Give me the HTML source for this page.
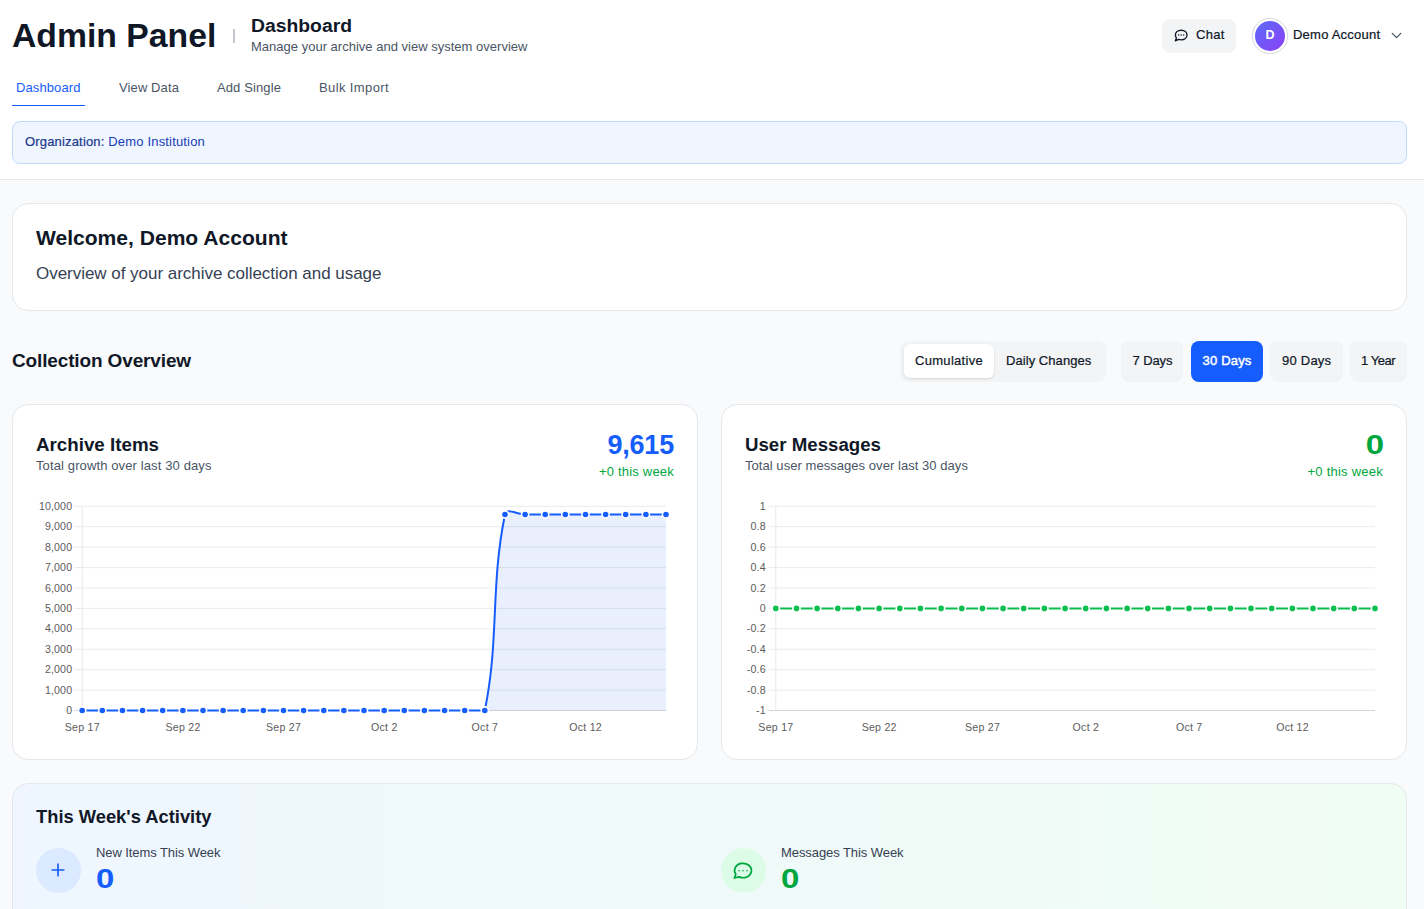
<!DOCTYPE html>
<html lang="en">
<head>
<meta charset="utf-8">
<title>Admin Panel - Dashboard</title>
<style>
*{box-sizing:border-box;margin:0;padding:0}
html,body{width:1424px;height:909px;overflow:hidden}
body{background:#f9fafb;font-family:"Liberation Sans",sans-serif;color:#101828;position:relative}
.abs{position:absolute;white-space:nowrap;line-height:1}
.med{-webkit-text-stroke:0.22px currentColor}
header{position:absolute;left:0;top:0;width:1424px;height:180px;background:#fff;border-bottom:1px solid #e5e7eb}
.h1{left:12px;top:18.9px;font-size:33px;font-weight:700;color:#101828}
.sep{left:233.2px;top:28.5px;width:1.6px;height:14.4px;background:#c3c7d4}
.h2{left:251px;top:17px;font-size:18px;font-weight:700;color:#101828}
.sub{left:251px;top:40px;font-size:13px;color:#4a5565}
.tab{top:81px;font-size:13px;color:#4a5565}
.tab.on{color:#155dfc}
.tabline{left:12px;top:104.6px;width:73px;height:1.4px;background:#155dfc}
.chat{left:1162px;top:19px;width:74px;height:34px;background:#f3f4f6;border-radius:8px}
.org{left:12px;top:121px;width:1395px;height:43px;background:#eff6ff;border:1px solid #bedbff;border-radius:8px}
.card{position:absolute;background:#fff;border:1px solid #e5e7eb;border-radius:16px}
.t20{font-size:20px;font-weight:700;color:#101828}
.t18{font-size:18px;font-weight:700;color:#101828}
.s13{font-size:13px;color:#4a5565}
.big{font-size:27px;font-weight:700}
.zero{display:inline-block;transform:scaleX(1.22);transform-origin:left center}
.blue{color:#155dfc}
.green{color:#00a63e}
.btn{position:absolute;top:341px;height:40.5px;background:#f3f4f6;border-radius:8px}
.btxt{top:354px;font-size:13px;color:#101828}
svg{position:absolute;overflow:visible}
svg text{font-family:"Liberation Sans",sans-serif;font-size:10.6px;fill:#5c5c5c;letter-spacing:0.25px}
/*LS*/#h1{letter-spacing:0;transform:scaleX(1.022);transform-origin:left center}
#h2{letter-spacing:0;transform:scaleX(1.0741);transform-origin:left center}
#sub{letter-spacing:0.01px}
#tab1{letter-spacing:0.10px}
#tab2{letter-spacing:0.11px}
#tab3{letter-spacing:0.11px}
#tab4{letter-spacing:0.39px}
#chat{letter-spacing:0.26px}
#acct{letter-spacing:0.23px}
#org{letter-spacing:0.17px}
#welcome{letter-spacing:0;transform:scaleX(1.0526);transform-origin:left center}
#wsub{letter-spacing:-0.03px}
#coll{letter-spacing:-0.14px}
#b1{letter-spacing:0.30px}
#b2{letter-spacing:0.06px}
#b3{letter-spacing:-0.13px}
#b4{letter-spacing:0.17px}
#b5{letter-spacing:0.23px}
#b6{letter-spacing:-0.48px}
#c1t{letter-spacing:0;transform:scaleX(1.0418);transform-origin:left center}
#c1s{letter-spacing:0.12px}
#c1v{letter-spacing:-0.2px}
#c1w{letter-spacing:0.20px}
#c2t{letter-spacing:0;transform:scaleX(1.0375);transform-origin:left center}
#c2s{letter-spacing:0.05px}
#c2v{letter-spacing:0}
#c2w{letter-spacing:0.24px}
#act{letter-spacing:0;transform:scaleX(1.0182);transform-origin:left center}
#ni{letter-spacing:-0.08px}
#niv{letter-spacing:0}
#mw{letter-spacing:-0.07px}
#mwv{letter-spacing:0}/*ENDLS*/
</style>
</head>
<body>
<header>
  <div class="abs h1" id="h1">Admin Panel</div>
  <div class="abs sep"></div>
  <div class="abs h2" id="h2">Dashboard</div>
  <div class="abs sub" id="sub">Manage your archive and view system overview</div>
  <div class="abs tab on" id="tab1" style="left:16px">Dashboard</div>
  <div class="abs tab" id="tab2" style="left:119px">View Data</div>
  <div class="abs tab" id="tab3" style="left:217px">Add Single</div>
  <div class="abs tab" id="tab4" style="left:319px">Bulk Import</div>
  <div class="abs tabline"></div>
  <div class="abs chat"></div>
  <svg style="left:1173.7px;top:29px" width="14" height="13" viewBox="0 0 14 13" fill="none" stroke="#101828" stroke-width="1.35" stroke-linecap="round" stroke-linejoin="round"><path d="M7.2 1.2C10.5 1.2 13 3.3 13 6s-2.5 4.8-5.800 4.800c-.9 0-1.700-.15-2.500-.45L1.300 11.800l1.200-2.700C1.800 8.200 1.400 7.200 1.400 6c0-2.700 2.500-4.800 5.800-4.800Z"/><path d="M4.700 6.100h.01M7.200 6.100h.01M9.700 6.100h.01" stroke-width="1.500"/></svg>
  <div class="abs med" id="chat" style="left:1196px;top:28px;font-size:13px;color:#101828">Chat</div>
  <div class="abs" style="left:1252.400px;top:18.400px;width:35.200px;height:35.200px;border-radius:50%;border:1.200px solid #d4d7dd;background:#fff"></div>
  <div class="abs" style="left:1255px;top:21px;width:30px;height:30px;border-radius:50%;background:linear-gradient(135deg,#5b6cf9,#8b3ff5)"></div>
  <div class="abs" style="left:1255px;top:28.500px;width:30px;text-align:center;font-size:12.500px;font-weight:700;color:#fff">D</div>
  <div class="abs med" id="acct" style="left:1293px;top:28px;font-size:13px;color:#101828">Demo Account</div>
  <svg style="left:1387.500px;top:27.100px" width="17" height="17" viewBox="0 0 24 24" fill="none" stroke="#4a5565" stroke-width="1.900" stroke-linecap="round" stroke-linejoin="round"><path d="M6 9l6 6 6-6"/></svg>
  <div class="abs org"></div>
  <div class="abs" id="org" style="left:25px;top:135px;font-size:13px;color:#193cb8"><span class="med" style="color:#1c398e">Organization:</span> Demo Institution</div>
</header>

<div class="card" style="left:12px;top:203px;width:1395px;height:108px"></div>
<div class="abs t20" id="welcome" style="left:36px;top:228px">Welcome, Demo Account</div>
<div class="abs" id="wsub" style="left:36px;top:265px;font-size:17px;color:#364153">Overview of your archive collection and usage</div>

<div class="abs t20" id="coll" style="left:12px;top:351.2px;font-size:19px">Collection Overview</div>

<div class="btn" style="left:900px;width:206px"></div>
<div class="abs" style="left:904px;top:344px;width:90px;height:34px;background:#fff;border-radius:6px;box-shadow:0 1px 3px rgba(0,0,0,.1),0 1px 2px -1px rgba(0,0,0,.1)"></div>
<div class="abs btxt med" id="b1" style="left:915px">Cumulative</div>
<div class="abs btxt med" id="b2" style="left:1006px">Daily Changes</div>
<div class="btn" style="left:1121px;width:62px"></div>
<div class="abs btxt med" id="b3" style="left:1132.6px">7 Days</div>
<div class="btn" style="left:1191px;width:72px;background:#155dfc"></div>
<div class="abs btxt med" id="b4" style="left:1202.6px;color:#fff;-webkit-text-stroke:0.45px #fff">30 Days</div>
<div class="btn" style="left:1270px;width:73px"></div>
<div class="abs btxt med" id="b5" style="left:1282px">90 Days</div>
<div class="btn" style="left:1350px;width:57px"></div>
<div class="abs btxt med" id="b6" style="left:1361px">1 Year</div>

<div class="card" style="left:12px;top:404px;width:686px;height:356px"></div>
<div class="abs t18" id="c1t" style="left:36px;top:436.2px">Archive Items</div>
<div class="abs s13" id="c1s" style="left:36px;top:459.3px">Total growth over last 30 days</div>
<div class="abs big blue" id="c1v" style="right:750px;top:432px">9,615</div>
<div class="abs s13 green" id="c1w" style="right:750px;top:465px;color:#00a63e">+0 this week</div>
<!--CHART1--><svg style="left:0;top:0" width="1424" height="909">
<line x1="74.5" y1="506.3" x2="666.0" y2="506.3" stroke="#e9ebee" stroke-width="1"/>
<text x="72.2" y="509.8" text-anchor="end" style="letter-spacing:0.15px">10,000</text>
<line x1="74.5" y1="526.7" x2="666.0" y2="526.7" stroke="#e9ebee" stroke-width="1"/>
<text x="72.2" y="530.2" text-anchor="end" style="letter-spacing:0.15px">9,000</text>
<line x1="74.5" y1="547.1" x2="666.0" y2="547.1" stroke="#e9ebee" stroke-width="1"/>
<text x="72.2" y="550.6" text-anchor="end" style="letter-spacing:0.15px">8,000</text>
<line x1="74.5" y1="567.6" x2="666.0" y2="567.6" stroke="#e9ebee" stroke-width="1"/>
<text x="72.2" y="571.1" text-anchor="end" style="letter-spacing:0.15px">7,000</text>
<line x1="74.5" y1="588.0" x2="666.0" y2="588.0" stroke="#e9ebee" stroke-width="1"/>
<text x="72.2" y="591.5" text-anchor="end" style="letter-spacing:0.15px">6,000</text>
<line x1="74.5" y1="608.4" x2="666.0" y2="608.4" stroke="#e9ebee" stroke-width="1"/>
<text x="72.2" y="611.9" text-anchor="end" style="letter-spacing:0.15px">5,000</text>
<line x1="74.5" y1="628.8" x2="666.0" y2="628.8" stroke="#e9ebee" stroke-width="1"/>
<text x="72.2" y="632.3" text-anchor="end" style="letter-spacing:0.15px">4,000</text>
<line x1="74.5" y1="649.2" x2="666.0" y2="649.2" stroke="#e9ebee" stroke-width="1"/>
<text x="72.2" y="652.7" text-anchor="end" style="letter-spacing:0.15px">3,000</text>
<line x1="74.5" y1="669.7" x2="666.0" y2="669.7" stroke="#e9ebee" stroke-width="1"/>
<text x="72.2" y="673.2" text-anchor="end" style="letter-spacing:0.15px">2,000</text>
<line x1="74.5" y1="690.1" x2="666.0" y2="690.1" stroke="#e9ebee" stroke-width="1"/>
<text x="72.2" y="693.6" text-anchor="end" style="letter-spacing:0.15px">1,000</text>
<line x1="74.5" y1="710.5" x2="666.0" y2="710.5" stroke="#d3d5d9" stroke-width="1"/>
<text x="72.2" y="714.0" text-anchor="end" style="letter-spacing:0.15px">0</text>
<line x1="82.2" y1="506.3" x2="82.2" y2="710.5" stroke="#e7e9ed" stroke-width="1"/>
<path d="M82.2 710.5 C90.3 710.5 94.3 710.5 102.3 710.5 C110.4 710.5 114.4 710.5 122.5 710.5 C130.5 710.5 134.5 710.5 142.6 710.5 C150.6 710.5 154.7 710.5 162.7 710.5 C170.8 710.5 174.8 710.5 182.9 710.5 C190.9 710.5 194.9 710.5 203.0 710.5 C211.0 710.5 215.1 710.5 223.1 710.5 C231.2 710.5 235.2 710.5 243.2 710.5 C251.3 710.5 255.3 710.5 263.4 710.5 C271.4 710.5 275.5 710.5 283.5 710.5 C291.6 710.5 295.6 710.5 303.6 710.5 C311.7 710.5 315.7 710.5 323.8 710.5 C331.8 710.5 335.9 710.5 343.9 710.5 C352.0 710.5 356.0 710.5 364.0 710.5 C372.1 710.5 376.1 710.5 384.2 710.5 C392.2 710.5 396.2 710.5 404.3 710.5 C412.3 710.5 416.4 710.5 424.4 710.5 C432.5 710.5 436.5 710.5 444.6 710.5 C452.6 710.5 456.6 710.5 464.7 710.5 C472.7 710.5 483.3 710.5 484.8 710.5 C499.4 639.4 490.3 585.6 505.0 514.5 C506.4 507.2 517.0 514.5 525.1 514.5 C533.1 514.5 537.2 514.5 545.2 514.5 C553.3 514.5 557.3 514.5 565.3 514.5 C573.4 514.5 577.4 514.5 585.5 514.5 C593.5 514.5 597.6 514.5 605.6 514.5 C613.7 514.5 617.7 514.5 625.7 514.5 C633.8 514.5 637.8 514.5 645.9 514.5 C653.9 514.5 657.9 514.5 666.0 514.5 L666.0 710.5 L82.2 710.5 Z" fill="rgba(37,99,235,0.1)" stroke="none"/>
<path d="M82.2 710.5 C90.3 710.5 94.3 710.5 102.3 710.5 C110.4 710.5 114.4 710.5 122.5 710.5 C130.5 710.5 134.5 710.5 142.6 710.5 C150.6 710.5 154.7 710.5 162.7 710.5 C170.8 710.5 174.8 710.5 182.9 710.5 C190.9 710.5 194.9 710.5 203.0 710.5 C211.0 710.5 215.1 710.5 223.1 710.5 C231.2 710.5 235.2 710.5 243.2 710.5 C251.3 710.5 255.3 710.5 263.4 710.5 C271.4 710.5 275.5 710.5 283.5 710.5 C291.6 710.5 295.6 710.5 303.6 710.5 C311.7 710.5 315.7 710.5 323.8 710.5 C331.8 710.5 335.9 710.5 343.9 710.5 C352.0 710.5 356.0 710.5 364.0 710.5 C372.1 710.5 376.1 710.5 384.2 710.5 C392.2 710.5 396.2 710.5 404.3 710.5 C412.3 710.5 416.4 710.5 424.4 710.5 C432.5 710.5 436.5 710.5 444.6 710.5 C452.6 710.5 456.6 710.5 464.7 710.5 C472.7 710.5 483.3 710.5 484.8 710.5 C499.4 639.4 490.3 585.6 505.0 514.5 C506.4 507.2 517.0 514.5 525.1 514.5 C533.1 514.5 537.2 514.5 545.2 514.5 C553.3 514.5 557.3 514.5 565.3 514.5 C573.4 514.5 577.4 514.5 585.5 514.5 C593.5 514.5 597.6 514.5 605.6 514.5 C613.7 514.5 617.7 514.5 625.7 514.5 C633.8 514.5 637.8 514.5 645.9 514.5 C653.9 514.5 657.9 514.5 666.0 514.5" fill="none" stroke="#155dfc" stroke-width="2"/>
<circle cx="82.2" cy="710.5" r="3.6" fill="#155dfc" stroke="#fff" stroke-width="1.6"/>
<circle cx="102.3" cy="710.5" r="3.6" fill="#155dfc" stroke="#fff" stroke-width="1.6"/>
<circle cx="122.5" cy="710.5" r="3.6" fill="#155dfc" stroke="#fff" stroke-width="1.6"/>
<circle cx="142.6" cy="710.5" r="3.6" fill="#155dfc" stroke="#fff" stroke-width="1.6"/>
<circle cx="162.7" cy="710.5" r="3.6" fill="#155dfc" stroke="#fff" stroke-width="1.6"/>
<circle cx="182.9" cy="710.5" r="3.6" fill="#155dfc" stroke="#fff" stroke-width="1.6"/>
<circle cx="203.0" cy="710.5" r="3.6" fill="#155dfc" stroke="#fff" stroke-width="1.6"/>
<circle cx="223.1" cy="710.5" r="3.6" fill="#155dfc" stroke="#fff" stroke-width="1.6"/>
<circle cx="243.2" cy="710.5" r="3.6" fill="#155dfc" stroke="#fff" stroke-width="1.6"/>
<circle cx="263.4" cy="710.5" r="3.6" fill="#155dfc" stroke="#fff" stroke-width="1.6"/>
<circle cx="283.5" cy="710.5" r="3.6" fill="#155dfc" stroke="#fff" stroke-width="1.6"/>
<circle cx="303.6" cy="710.5" r="3.6" fill="#155dfc" stroke="#fff" stroke-width="1.6"/>
<circle cx="323.8" cy="710.5" r="3.6" fill="#155dfc" stroke="#fff" stroke-width="1.6"/>
<circle cx="343.9" cy="710.5" r="3.6" fill="#155dfc" stroke="#fff" stroke-width="1.6"/>
<circle cx="364.0" cy="710.5" r="3.6" fill="#155dfc" stroke="#fff" stroke-width="1.6"/>
<circle cx="384.2" cy="710.5" r="3.6" fill="#155dfc" stroke="#fff" stroke-width="1.6"/>
<circle cx="404.3" cy="710.5" r="3.6" fill="#155dfc" stroke="#fff" stroke-width="1.6"/>
<circle cx="424.4" cy="710.5" r="3.6" fill="#155dfc" stroke="#fff" stroke-width="1.6"/>
<circle cx="444.6" cy="710.5" r="3.6" fill="#155dfc" stroke="#fff" stroke-width="1.6"/>
<circle cx="464.7" cy="710.5" r="3.6" fill="#155dfc" stroke="#fff" stroke-width="1.6"/>
<circle cx="484.8" cy="710.5" r="3.6" fill="#155dfc" stroke="#fff" stroke-width="1.6"/>
<circle cx="505.0" cy="514.5" r="3.6" fill="#155dfc" stroke="#fff" stroke-width="1.6"/>
<circle cx="525.1" cy="514.5" r="3.6" fill="#155dfc" stroke="#fff" stroke-width="1.6"/>
<circle cx="545.2" cy="514.5" r="3.6" fill="#155dfc" stroke="#fff" stroke-width="1.6"/>
<circle cx="565.3" cy="514.5" r="3.6" fill="#155dfc" stroke="#fff" stroke-width="1.6"/>
<circle cx="585.5" cy="514.5" r="3.6" fill="#155dfc" stroke="#fff" stroke-width="1.6"/>
<circle cx="605.6" cy="514.5" r="3.6" fill="#155dfc" stroke="#fff" stroke-width="1.6"/>
<circle cx="625.7" cy="514.5" r="3.6" fill="#155dfc" stroke="#fff" stroke-width="1.6"/>
<circle cx="645.9" cy="514.5" r="3.6" fill="#155dfc" stroke="#fff" stroke-width="1.6"/>
<circle cx="666.0" cy="514.5" r="3.6" fill="#155dfc" stroke="#fff" stroke-width="1.6"/>
<text x="82.3" y="731.4" text-anchor="middle">Sep 17</text>
<text x="183.0" y="731.4" text-anchor="middle">Sep 22</text>
<text x="283.6" y="731.4" text-anchor="middle">Sep 27</text>
<text x="384.3" y="731.4" text-anchor="middle">Oct 2</text>
<text x="484.9" y="731.4" text-anchor="middle">Oct 7</text>
<text x="585.6" y="731.4" text-anchor="middle">Oct 12</text>
</svg><!--/CHART1-->

<div class="card" style="left:721px;top:404px;width:686px;height:356px"></div>
<div class="abs t18" id="c2t" style="left:745px;top:436.2px">User Messages</div>
<div class="abs s13" id="c2s" style="left:745px;top:459.3px">Total user messages over last 30 days</div>
<div class="abs big green" id="c2v" style="right:40px;top:432.3px"><span class="zero" style="transform-origin:right center">0</span></div>
<div class="abs s13 green" id="c2w" style="right:41px;top:465px;color:#00a63e">+0 this week</div>
<!--CHART2--><svg style="left:0;top:0" width="1424" height="909">
<line x1="768.4" y1="506.3" x2="1375.0" y2="506.3" stroke="#e9ebee" stroke-width="1"/>
<text x="765.7" y="509.8" text-anchor="end" style="letter-spacing:0.15px">1</text>
<line x1="768.4" y1="526.7" x2="1375.0" y2="526.7" stroke="#e9ebee" stroke-width="1"/>
<text x="765.7" y="530.2" text-anchor="end" style="letter-spacing:0.15px">0.8</text>
<line x1="768.4" y1="547.1" x2="1375.0" y2="547.1" stroke="#e9ebee" stroke-width="1"/>
<text x="765.7" y="550.6" text-anchor="end" style="letter-spacing:0.15px">0.6</text>
<line x1="768.4" y1="567.6" x2="1375.0" y2="567.6" stroke="#e9ebee" stroke-width="1"/>
<text x="765.7" y="571.1" text-anchor="end" style="letter-spacing:0.15px">0.4</text>
<line x1="768.4" y1="588.0" x2="1375.0" y2="588.0" stroke="#e9ebee" stroke-width="1"/>
<text x="765.7" y="591.5" text-anchor="end" style="letter-spacing:0.15px">0.2</text>
<line x1="768.4" y1="608.4" x2="1375.0" y2="608.4" stroke="#e9ebee" stroke-width="1"/>
<text x="765.7" y="611.9" text-anchor="end" style="letter-spacing:0.15px">0</text>
<line x1="768.4" y1="628.8" x2="1375.0" y2="628.8" stroke="#e9ebee" stroke-width="1"/>
<text x="765.7" y="632.3" text-anchor="end" style="letter-spacing:0.15px">-0.2</text>
<line x1="768.4" y1="649.2" x2="1375.0" y2="649.2" stroke="#e9ebee" stroke-width="1"/>
<text x="765.7" y="652.7" text-anchor="end" style="letter-spacing:0.15px">-0.4</text>
<line x1="768.4" y1="669.7" x2="1375.0" y2="669.7" stroke="#e9ebee" stroke-width="1"/>
<text x="765.7" y="673.2" text-anchor="end" style="letter-spacing:0.15px">-0.6</text>
<line x1="768.4" y1="690.1" x2="1375.0" y2="690.1" stroke="#e9ebee" stroke-width="1"/>
<text x="765.7" y="693.6" text-anchor="end" style="letter-spacing:0.15px">-0.8</text>
<line x1="768.4" y1="710.5" x2="1375.0" y2="710.5" stroke="#d3d5d9" stroke-width="1"/>
<text x="765.7" y="714.0" text-anchor="end" style="letter-spacing:0.15px">-1</text>
<line x1="775.8" y1="506.3" x2="775.8" y2="710.5" stroke="#e7e9ed" stroke-width="1"/>
<path d="M775.8 608.4 C784.1 608.4 788.2 608.4 796.5 608.4 C804.7 608.4 808.9 608.4 817.1 608.4 C825.4 608.4 829.5 608.4 837.8 608.4 C846.1 608.4 850.2 608.4 858.4 608.4 C866.7 608.4 870.8 608.4 879.1 608.4 C887.4 608.4 891.5 608.4 899.8 608.4 C908.0 608.4 912.2 608.4 920.4 608.4 C928.7 608.4 932.8 608.4 941.1 608.4 C949.4 608.4 953.5 608.4 961.8 608.4 C970.0 608.4 974.2 608.4 982.4 608.4 C990.7 608.4 994.8 608.4 1003.1 608.4 C1011.3 608.4 1015.5 608.4 1023.7 608.4 C1032.0 608.4 1036.1 608.4 1044.4 608.4 C1052.7 608.4 1056.8 608.4 1065.1 608.4 C1073.3 608.4 1077.5 608.4 1085.7 608.4 C1094.0 608.4 1098.1 608.4 1106.4 608.4 C1114.7 608.4 1118.8 608.4 1127.1 608.4 C1135.3 608.4 1139.5 608.4 1147.7 608.4 C1156.0 608.4 1160.1 608.4 1168.4 608.4 C1176.6 608.4 1180.8 608.4 1189.0 608.4 C1197.3 608.4 1201.4 608.4 1209.7 608.4 C1218.0 608.4 1222.1 608.4 1230.4 608.4 C1238.6 608.4 1242.8 608.4 1251.0 608.4 C1259.3 608.4 1263.4 608.4 1271.7 608.4 C1280.0 608.4 1284.1 608.4 1292.4 608.4 C1300.6 608.4 1304.7 608.4 1313.0 608.4 C1321.3 608.4 1325.4 608.4 1333.7 608.4 C1341.9 608.4 1346.1 608.4 1354.3 608.4 C1362.6 608.4 1366.7 608.4 1375.0 608.4" fill="none" stroke="#0abf4f" stroke-width="2"/>
<circle cx="775.8" cy="608.4" r="3.6" fill="#0abf4f" stroke="#fff" stroke-width="1.6"/>
<circle cx="796.5" cy="608.4" r="3.6" fill="#0abf4f" stroke="#fff" stroke-width="1.6"/>
<circle cx="817.1" cy="608.4" r="3.6" fill="#0abf4f" stroke="#fff" stroke-width="1.6"/>
<circle cx="837.8" cy="608.4" r="3.6" fill="#0abf4f" stroke="#fff" stroke-width="1.6"/>
<circle cx="858.4" cy="608.4" r="3.6" fill="#0abf4f" stroke="#fff" stroke-width="1.6"/>
<circle cx="879.1" cy="608.4" r="3.6" fill="#0abf4f" stroke="#fff" stroke-width="1.6"/>
<circle cx="899.8" cy="608.4" r="3.6" fill="#0abf4f" stroke="#fff" stroke-width="1.6"/>
<circle cx="920.4" cy="608.4" r="3.6" fill="#0abf4f" stroke="#fff" stroke-width="1.6"/>
<circle cx="941.1" cy="608.4" r="3.6" fill="#0abf4f" stroke="#fff" stroke-width="1.6"/>
<circle cx="961.8" cy="608.4" r="3.6" fill="#0abf4f" stroke="#fff" stroke-width="1.6"/>
<circle cx="982.4" cy="608.4" r="3.6" fill="#0abf4f" stroke="#fff" stroke-width="1.6"/>
<circle cx="1003.1" cy="608.4" r="3.6" fill="#0abf4f" stroke="#fff" stroke-width="1.6"/>
<circle cx="1023.7" cy="608.4" r="3.6" fill="#0abf4f" stroke="#fff" stroke-width="1.6"/>
<circle cx="1044.4" cy="608.4" r="3.6" fill="#0abf4f" stroke="#fff" stroke-width="1.6"/>
<circle cx="1065.1" cy="608.4" r="3.6" fill="#0abf4f" stroke="#fff" stroke-width="1.6"/>
<circle cx="1085.7" cy="608.4" r="3.6" fill="#0abf4f" stroke="#fff" stroke-width="1.6"/>
<circle cx="1106.4" cy="608.4" r="3.6" fill="#0abf4f" stroke="#fff" stroke-width="1.6"/>
<circle cx="1127.1" cy="608.4" r="3.6" fill="#0abf4f" stroke="#fff" stroke-width="1.6"/>
<circle cx="1147.7" cy="608.4" r="3.6" fill="#0abf4f" stroke="#fff" stroke-width="1.6"/>
<circle cx="1168.4" cy="608.4" r="3.6" fill="#0abf4f" stroke="#fff" stroke-width="1.6"/>
<circle cx="1189.0" cy="608.4" r="3.6" fill="#0abf4f" stroke="#fff" stroke-width="1.6"/>
<circle cx="1209.7" cy="608.4" r="3.6" fill="#0abf4f" stroke="#fff" stroke-width="1.6"/>
<circle cx="1230.4" cy="608.4" r="3.6" fill="#0abf4f" stroke="#fff" stroke-width="1.6"/>
<circle cx="1251.0" cy="608.4" r="3.6" fill="#0abf4f" stroke="#fff" stroke-width="1.6"/>
<circle cx="1271.7" cy="608.4" r="3.6" fill="#0abf4f" stroke="#fff" stroke-width="1.6"/>
<circle cx="1292.4" cy="608.4" r="3.6" fill="#0abf4f" stroke="#fff" stroke-width="1.6"/>
<circle cx="1313.0" cy="608.4" r="3.6" fill="#0abf4f" stroke="#fff" stroke-width="1.6"/>
<circle cx="1333.7" cy="608.4" r="3.6" fill="#0abf4f" stroke="#fff" stroke-width="1.6"/>
<circle cx="1354.3" cy="608.4" r="3.6" fill="#0abf4f" stroke="#fff" stroke-width="1.6"/>
<circle cx="1375.0" cy="608.4" r="3.6" fill="#0abf4f" stroke="#fff" stroke-width="1.6"/>
<text x="775.9" y="731.4" text-anchor="middle">Sep 17</text>
<text x="879.2" y="731.4" text-anchor="middle">Sep 22</text>
<text x="982.5" y="731.4" text-anchor="middle">Sep 27</text>
<text x="1085.9" y="731.4" text-anchor="middle">Oct 2</text>
<text x="1189.2" y="731.4" text-anchor="middle">Oct 7</text>
<text x="1292.5" y="731.4" text-anchor="middle">Oct 12</text>
</svg><!--/CHART2-->

<div class="card" style="left:12px;top:783px;width:1395px;height:200px;background:linear-gradient(90deg,#eff6ff,#f0fdf4)"></div>
<div class="abs t18" id="act" style="left:36px;top:808.3px">This Week's Activity</div>
<div class="abs" style="left:35.900px;top:847.800px;width:45px;height:45px;border-radius:50%;background:#dbeafe"></div>
<svg style="left:48.400px;top:860.400px" width="20" height="20" viewBox="0 0 24 24" fill="none" stroke="#155dfc" stroke-width="2" stroke-linecap="round"><path d="M5 12h14M12 5v14"/></svg>
<div class="abs" id="ni" style="left:96px;top:846px;font-size:13px;color:#364153">New Items This Week</div>
<div class="abs big blue" id="niv" style="left:95.700px;top:866.100px"><span class="zero">0</span></div>
<div class="abs" style="left:720.900px;top:847.800px;width:45px;height:45px;border-radius:50%;background:#dcfce7"></div>
<svg style="left:733.300px;top:862.100px" width="20" height="18" viewBox="0 0 20 18" fill="none" stroke="#00a63e" stroke-width="1.700" stroke-linecap="round" stroke-linejoin="round"><path d="M2.830 12.320L1.300 16L6.030 14.860A8.450 7.200 0 1 0 2.830 12.320Z"/><path d="M6 8.700h.01M10 8.700h.01M14 8.700h.01" stroke-width="1.600"/></svg>
<div class="abs" id="mw" style="left:781px;top:846px;font-size:13px;color:#364153">Messages This Week</div>
<div class="abs big green" id="mwv" style="left:780.700px;top:866.100px"><span class="zero">0</span></div>
</body>
</html>
